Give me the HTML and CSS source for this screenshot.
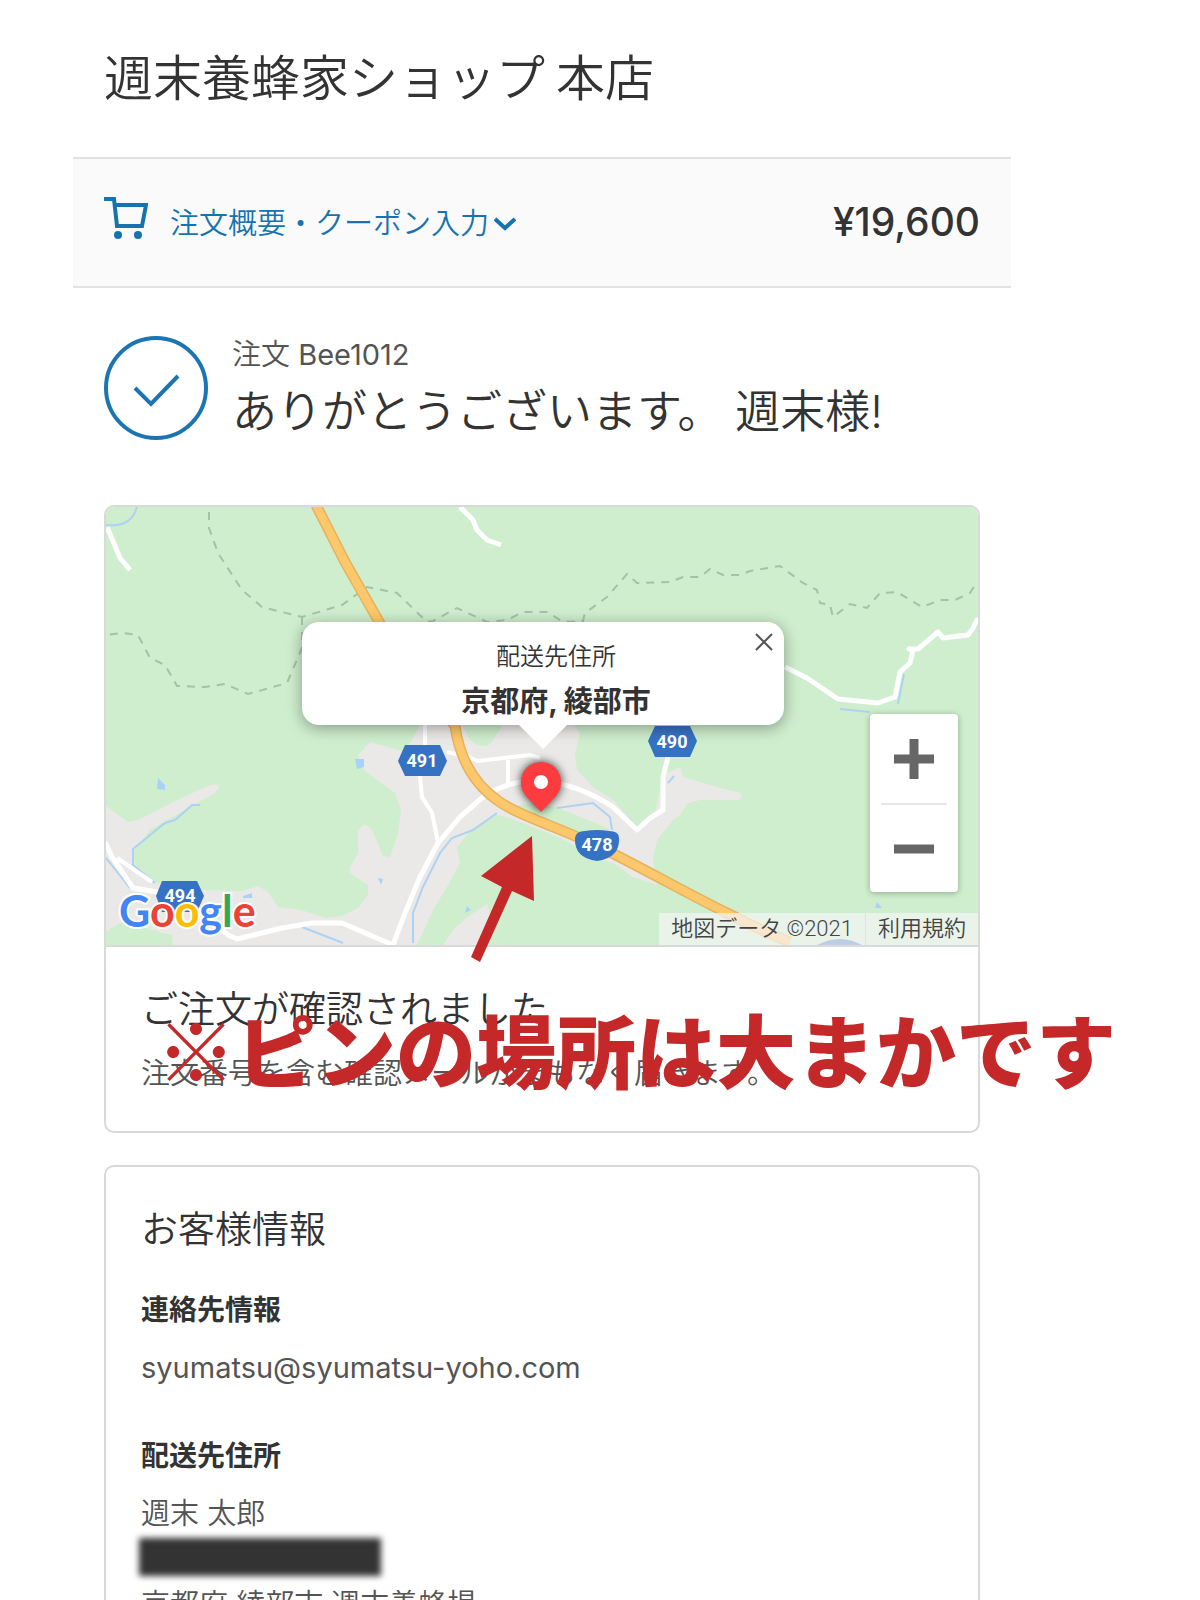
FILE: index.html
```html
<!DOCTYPE html>
<html lang="ja">
<head>
    <meta charset="UTF-8">
    <meta name="viewport" content="width=device-width, initial-scale=1.0">
    <title>週末養蜂家ショップ 本店</title>
    <link rel="stylesheet" href="styles.css">
</head>
<body>
    <div class="page">
        <header class="site-header">
            <h1>週末養蜂家ショップ 本店</h1>
        </header>

        <div class="summary-bar">
            <button type="button" class="summary-toggle">
                <svg class="cart-icon" width="44" height="50" viewBox="0 0 44 50" aria-hidden="true">
                    <path d="M0 2H10L13 29H38L42 8H10" fill="none" stroke="#1773b0" stroke-width="4"/>
                    <circle cx="14" cy="38" r="4" fill="#1773b0"/>
                    <circle cx="34" cy="38" r="4" fill="#1773b0"/>
                </svg>
                <span class="summary-label">
                    注文概要・クーポン入力
                    <svg width="22" height="14" viewBox="0 0 22 14" aria-hidden="true">
                        <path d="M1 2L11 11L21 2" fill="none" stroke="#1773b0" stroke-width="4"/>
                    </svg>
                </span>
            </button>
            <span class="total">¥19,600</span>
        </div>

        <main>
            <div class="thanks">
                <svg width="105" height="106" viewBox="0 0 105 106" aria-hidden="true">
                    <circle cx="52" cy="52" r="50" fill="none" stroke="#1c75b0" stroke-width="4"/>
                    <path d="M31 52L47 68L74 40" fill="none" stroke="#1c75b0" stroke-width="4"/>
                </svg>
                <div>
                    <p class="order-number">注文 <span class="latin">Bee1012</span></p>
                    <h2>ありがとうございます。 週末様!</h2>
                </div>
            </div>

            <section class="card">
                <div class="map">
                    <svg class="map-canvas" viewBox="106 507 872 438" preserveAspectRatio="xMidYMid slice" aria-hidden="true">
                        <rect x="106" y="507" width="872" height="438" fill="#ceeecd"/>
                        <!-- built-up land -->
                        <path fill="#ebe9e7" d="M105 805L115 813L128 822L138 820L175 801L210 785Q220 783 219 788L215 793L172 817L150 830L133 852L135 865L155 882L205 890L242 891L258 886L268 892L278 907L302 910L325 918L342 916L358 908L368 895V885L350 873V867L358 853V830L365 824L372 830L383 856L390 857L398 833L401 810L395 793L365 771L358 755L370 742L405 752L420 725H574L580 733L575 753L577 770L593 787L613 800L637 827L655 815L663 775L680 767L683 777L720 788L741 793Q743 800 736 800H700L688 803L680 815L673 820L657 840L653 860L657 885L633 877L613 863L600 860L560 838L510 818L497 815L473 828L457 847L460 863L447 887L433 910L417 945H106Z"/>
                        <path fill="#ceeecd" d="M462 725H503L490 744Q482 750 470 740Z"/>
                        <path fill="#ceeecd" d="M105 932L122 922L172 935L173 945H105Z"/>
                        <path fill="#ceeecd" d="M515 806Q540 800 568 812L610 829L598 838L545 822Z"/>
                        <path fill="#ebe9e7" d="M443 945L453 930L467 917L487 904L490 913L484 945Z"/>
                        <!-- water -->
                        <g fill="none" stroke="#add3f3" stroke-width="2">
                            <path d="M106 525Q131 528 137 507"/>
                            <path d="M200 805H192L175 820L165 823L133 849V865L155 883"/>
                            <path d="M497 813L473 830L452 838L440 853L423 887L413 913V943"/>
                            <path d="M557 808L593 803L610 817L612 830"/>
                            <path d="M302 927L343 943M106 858L130 888M840 709L870 712M898 704L904 674M668 783L674 776"/>
                        </g>
                        <path fill="#a9d2fa" d="M355 759H364V767L357 769ZM158 778L165 785V790L157 789ZM378 878L383 879L381 885ZM467 906L471 910L465 913ZM877 902L882 908H875ZM243 896L252 893V898H243Z"/>
                        <!-- trails -->
                        <g fill="none" stroke="#a4c2a5" stroke-width="2" stroke-dasharray="8 7">
                            <path d="M209 512V528L218 553L242 590L262 607L302 617L342 605L367 587L397 593L427 622L433 621L457 608L487 622L507 620L523 612H547L563 622L583 621L585 613L607 597L627 574L637 583L670 582L683 577H700L710 569L723 575H740L750 571L780 566L803 583L817 590L820 603L830 605L833 617L850 604L867 608L880 593L897 592L922 607L940 600H955L970 593L977 582"/>
                            <path d="M302 617V648L287 683L248 694L225 684L205 687L177 686L165 665L150 658L138 635L123 633L105 635"/>
                        </g>
                        <!-- local roads -->
                        <g fill="none" stroke="#fff" stroke-width="5" stroke-linejoin="round">
                            <path d="M107 527L120 558L130 570"/>
                            <path d="M460 507L473 520L477 530L487 540L501 545"/>
                            <path d="M785 667L807 678L838 699L878 703L895 697L900 672L910 663L913 650L909 649H918L938 632L943 638L968 635L973 628L978 618"/>
                            <path d="M393 945L405 913L420 877L438 843L460 817L483 797Q510 780 540 780Q580 785 613 807L637 830L650 818L663 810V777L668 757"/>
                            <path d="M105 842L112 857L133 888L158 892L200 910L228 935L237 939L282 928L312 923H342L393 945"/>
                        </g>
                        <g fill="none" stroke="#fff" stroke-width="4">
                            <path d="M425 725V745M420 776L422 797L432 813L438 842"/>
                            <path d="M447 752L468 757L478 761L530 755L540 758M508 760V783M117 858L152 882"/>
                        </g>
                        <!-- national road -->
                        <g fill="none">
                            <path stroke="#e6b25c" stroke-width="11" d="M316 505L345 562L382 627L455 726Q462 775 497 800C515 814 560 828 600 847C650 872 690 895 727 913Q760 930 790 942"/>
                            <path stroke="#fdc76b" stroke-width="8" d="M316 505L345 562L382 627L455 726Q462 775 497 800C515 814 560 828 600 847C650 872 690 895 727 913Q760 930 790 942"/>
                        </g>
                        <path fill="#3672c4" d="M817 945Q840 933 862 945Z"/>
                        <!-- route signs -->
                        <g fill="#3672c4">
                            <path d="M398 761L405 745H440L447 761L440 776H405Z"/>
                            <path d="M648 741L655 726H690L697 741L690 757H655Z"/>
                            <path d="M156 896L162 881H197L204 896L197 912H162Z"/>
                            <path d="M575 838Q576 831 585 831Q597 829 609 831Q619 831 619 838Q620 858 597 861Q574 858 575 838Z"/>
                        </g>
                        <g class="route-number">
                            <text x="422" y="767">491</text>
                            <text x="672" y="748">490</text>
                            <text x="180" y="902">494</text>
                            <text x="597" y="851">478</text>
                        </g>
                        <text class="google" x="119" y="927"><tspan fill="#4285f4">G</tspan><tspan fill="#ea4335">o</tspan><tspan fill="#fbbc05">o</tspan><tspan fill="#4285f4">g</tspan><tspan fill="#34a853">l</tspan><tspan fill="#ea4335">e</tspan></text>
                        <path class="pin" fill="#fc3c3f" d="M541 812Q537 808 526 796Q521 790 521 782A20 20 0 0 1 561 782Q561 790 556 796Q545 808 541 812Z"/>
                        <circle cx="541" cy="782" r="7" fill="#fff"/>
                    </svg>

                    <div class="info-window">
                        <p>配送先住所</p>
                        <p class="place">京都府, 綾部市</p>
                        <button type="button" class="close" aria-label="閉じる">
                            <svg width="18" height="18" viewBox="0 0 18 18"><path d="M1 1L17 17M17 1L1 17" stroke="#555" stroke-width="2"/></svg>
                        </button>
                    </div>

                    <div class="zoom-control">
                        <button type="button" aria-label="拡大">
                            <svg width="40" height="40" viewBox="0 0 40 40"><path d="M0 20H40M20 0V40" stroke="#666" stroke-width="9"/></svg>
                        </button>
                        <button type="button" aria-label="縮小">
                            <svg width="40" height="40" viewBox="0 0 40 40"><path d="M0 20H40" stroke="#666" stroke-width="9"/></svg>
                        </button>
                    </div>

                    <div class="map-credit">
                        <span>地図データ ©2021</span>
                        <a href="#">利用規約</a>
                    </div>
                </div>

                <div class="card-body">
                    <h3>ご注文が確認されました</h3>
                    <p class="message">注文番号を含む確認メールがまもなく届きます。</p>
                </div>

                <svg class="note-arrow" width="64" height="126" viewBox="0 0 64 126" aria-hidden="true">
                    <path fill="#c52828" d="M51 0L53 65L31 55L-1 126L-10 121L21 51L0 40Z"/>
                </svg>
                <p class="note"><span>※</span>ピンの場所は大まかです</p>
            </section>

            <section class="card">
                <div class="card-body">
                    <h3>お客様情報</h3>
                    <div class="info-block">
                        <h4>連絡先情報</h4>
                        <p class="latin">syumatsu@syumatsu-yoho.com</p>
                    </div>
                    <div class="info-block">
                        <h4>配送先住所</h4>
                        <address>
                            週末 太郎
                            <span class="redacted"></span>
                            京都府 綾部市 週末養蜂場
                        </address>
                    </div>
                </div>
            </section>
        </main>
    </div>
</body>
</html>
```
FILE: styles.css
```css
* {
    box-sizing: border-box;
}

body {
    margin: 0;
    height: 100vh;
    overflow: hidden;
    background-color: #fff;
    color: #545454;
    font-family: Inter, "Noto Sans CJK JP", sans-serif;
    font-size: 29px;
    font-weight: 350;
    line-height: 42px;
}

h1, h2, h3, h4, p {
    margin: 0;
    font-weight: 350;
}

button {
    border: none;
    background: none;
    padding: 0;
    font: inherit;
    cursor: pointer;
}

svg {
    display: block;
}

.latin {
    font-weight: 400;
}

.page {
    margin: 0 189px 0 73px;
}

.site-header {
    padding: 40px 31px 47px;
}

h1 {
    color: #333;
    font-family: "Noto Sans CJK JP", sans-serif;
    font-size: 49px;
    line-height: 70px;
}

/* order summary bar */
.summary-bar {
    display: flex;
    justify-content: space-between;
    align-items: center;
    height: 131px;
    padding: 0 31px 2px;
    background-color: #fafafa;
    border-top: 2px solid #e2e2e2;
    border-bottom: 2px solid #e2e2e2;
}

.summary-toggle {
    display: flex;
    align-items: center;
    gap: 22px;
    color: #1773b0;
}

.summary-label {
    display: flex;
    align-items: center;
    gap: 5px;
    padding-top: 4px;
}

.total {
    color: #333;
    font-size: 39px;
    font-weight: 500;
}

main {
    padding: 48px 31px 0;
}

.thanks {
    display: flex;
    gap: 23px;
    margin-bottom: 55px;
}

.order-number {
    line-height: 38px;
}

h2 {
    color: #333;
    font-size: 45px;
    line-height: 76px;
}

/* cards */
.card {
    position: relative;
    margin-bottom: 32px;
    border: 2px solid #d9d9d9;
    border-radius: 10px;
}

.card-body {
    padding: 36px 35px;
}

h3 {
    color: #333;
    font-size: 37px;
    line-height: 54px;
}

h4 {
    margin-bottom: 16px;
    color: #333;
    font-size: 28px;
    font-weight: 700;
}

.message {
    margin-top: 16px;
}

.info-block {
    margin-top: 32px;
}

.info-block + .info-block {
    margin-top: 46px;
}

address {
    font-style: normal;
}

.redacted {
    display: block;
    width: 242px;
    height: 38px;
    margin: 3px 0 8px -2px;
    background-color: #333;
    filter: blur(3px);
}

/* map */
.map {
    position: relative;
    height: 440px;
    overflow: hidden;
    border-bottom: 2px solid #d9d9d9;
    border-radius: 8px 8px 0 0;
}

.map-canvas {
    width: 100%;
    height: 100%;
}

.route-number {
    fill: #fff;
    font-family: Roboto, sans-serif;
    font-size: 18px;
    font-weight: 700;
    text-anchor: middle;
}

.google {
    font-family: Lato, sans-serif;
    font-size: 43px;
    font-weight: 700;
    stroke: #fff;
    stroke-width: 4px;
    paint-order: stroke;
}

.pin {
    filter: drop-shadow(0 0 5px rgba(0, 0, 0, 0.8));
}

.info-window {
    position: absolute;
    top: 115px;
    left: 50%;
    width: 482px;
    margin-left: -240px;
    padding: 14px 0 2px 26px;
    background-color: #fff;
    border-radius: 17px;
    box-shadow: 0 3px 15px rgba(0, 0, 0, 0.35);
    color: #333;
    font-size: 24px;
    text-align: center;
}

.info-window::after {
    content: "";
    position: absolute;
    top: 100%;
    left: 50%;
    margin-left: -24px;
    border: 24px solid transparent;
    border-top-color: #fff;
    border-bottom: none;
}

.place {
    margin-top: 3px;
    font-size: 29px;
    font-weight: 700;
}

.close {
    position: absolute;
    top: 11px;
    right: 11px;
}

.zoom-control {
    position: absolute;
    right: 20px;
    bottom: 53px;
    width: 88px;
    padding: 0 11px;
    background-color: #fff;
    border-radius: 4px;
    box-shadow: 0 1px 6px rgba(0, 0, 0, 0.3);
}

.zoom-control button {
    display: flex;
    justify-content: center;
    align-items: center;
    width: 100%;
    height: 89px;
}

.zoom-control button + button {
    border-top: 2px solid #e6e6e6;
}

.map-credit {
    position: absolute;
    right: 0;
    bottom: 0;
    display: flex;
    gap: 1px;
    font-family: Roboto, "Noto Sans CJK JP", sans-serif;
    font-size: 22px;
    line-height: 32px;
}

.map-credit span,
.map-credit a {
    padding: 0 12px;
    background-color: rgba(245, 245, 245, 0.7);
    color: #444;
    text-decoration: none;
}

/* red note laid over the first card */
.note {
    position: absolute;
    top: 480px;
    left: 50px;
    color: #c52828;
    font-family: "Noto Sans CJK JP", sans-serif;
    font-size: 80px;
    font-weight: 900;
    line-height: 120px;
    white-space: nowrap;
}

.note span {
    font-weight: 400;
}

.note-arrow {
    position: absolute;
    top: 329px;
    left: 375px;
    overflow: visible;
}
```
